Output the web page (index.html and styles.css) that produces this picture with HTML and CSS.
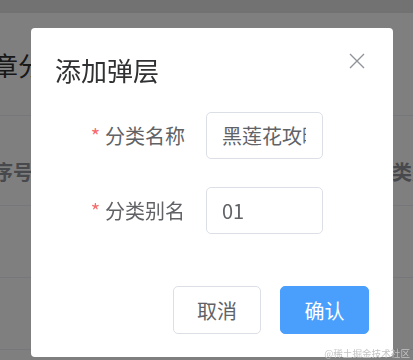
FILE: index.html
```html
<!DOCTYPE html>
<html lang="zh-CN">
<head>
<meta charset="utf-8">
<title>添加弹层</title>
<link rel="stylesheet" href="styles.css">
</head>
<body>
<div class="page">
  <div class="topbar"></div>
  <div class="heading">文章分类</div>
  <div class="table">
    <div class="thead">
      <span class="th first">序号</span>
      <span class="th">分类别名</span>
    </div>
    <div class="trow"></div>
    <div class="trow"></div>
  </div>
</div>
<div class="overlay"></div>
<div class="dialog">
  <div class="dialog-header">
    <span class="dialog-title">添加弹层</span>
    <button class="close" aria-label="关闭">
      <svg width="16" height="16" viewBox="0 0 16 16"><path d="M1 1 L15 15 M15 1 L1 15" stroke="#909399" stroke-width="1.4" fill="none"/></svg>
    </button>
  </div>
  <div class="dialog-body">
    <div class="form-item">
      <label class="label"><span class="req">*</span>分类名称</label>
      <input class="input" type="text" value="黑莲花攻略">
    </div>
    <div class="form-item">
      <label class="label"><span class="req">*</span>分类别名</label>
      <input class="input" type="text" value="01">
    </div>
  </div>
  <div class="dialog-footer">
    <button class="btn">取消</button>
    <button class="btn primary">确认</button>
  </div>
</div>
<div class="watermark">@稀土掘金技术社区</div>
</body>
</html>
```

FILE: styles.css
```css
* { box-sizing: border-box; }
html, body {
  margin: 0;
  padding: 0;
  width: 413px;
  height: 360px;
  overflow: hidden;
  background: #ffffff;
  font-family: "Noto Sans CJK SC", "Noto Sans", sans-serif;
}
.page {
  width: 413px;
  height: 360px;
  overflow: hidden;
  background: #ffffff;
}
.topbar {
  height: 13px;
  background: #e4e4e4;
}
.heading {
  height: 103px;
  margin-left: -34px;
  padding-top: 39px;
  font-size: 26px;
  line-height: 26px;
  color: #303133;
  border-bottom: 1px solid #ebeef5;
  white-space: nowrap;
}
.thead {
  display: grid;
  grid-template-columns: 372px auto;
  height: 90px;
  align-items: start;
  padding-top: 46px;
  border-bottom: 1px solid #ebeef5;
  white-space: nowrap;
}
.th {
  font-size: 20px;
  line-height: 20px;
  font-weight: bold;
  color: #909399;
}
.th.first { margin-left: -7px; }
.trow {
  height: 72px;
  border-bottom: 1px solid #ebeef5;
}
.overlay {
  position: fixed;
  inset: 0;
  background: rgba(0, 0, 0, 0.5);
}
.dialog {
  position: fixed;
  left: 31px;
  top: 28px;
  width: 362px;
  height: 329px;
  background: #ffffff;
  border-radius: 4px;
  display: flex;
  flex-direction: column;
}
.dialog-header {
  position: relative;
  padding: 29px 24px 0 24px;
  height: 55px;
}
.dialog-title {
  display: block;
  font-size: 26px;
  line-height: 26px;
  color: #303133;
}
.close {
  position: absolute;
  left: 318px;
  top: 25px;
  width: 16px;
  height: 16px;
  padding: 0;
  border: 0;
  background: transparent;
  display: block;
}
.close svg { display: block; }
.dialog-body {
  padding-top: 29px;
  padding-left: 24px;
  display: flex;
  flex-direction: column;
  gap: 28px;
}
.form-item {
  display: flex;
  align-items: center;
  height: 47px;
}
.label {
  width: 151px;
  flex-shrink: 0;
  padding-right: 21px;
  text-align: right;
  font-size: 20px;
  line-height: 47px;
  color: #606266;
  white-space: nowrap;
}
.req {
  color: #f56c6c;
  margin-right: 5px;
}
.input {
  width: 117px;
  height: 47px;
  border: 1px solid #dcdfe6;
  border-radius: 5px;
  padding: 0 16px 0 15px;
  font-family: "Noto Sans CJK SC", "Noto Sans", sans-serif;
  font-size: 20px;
  color: #606266;
  background: #ffffff;
  outline: none;
}
.dialog-footer {
  margin-top: auto;
  display: flex;
  justify-content: flex-end;
  gap: 19px;
  padding: 0 24px 23px 0;
}
.btn {
  width: 88px;
  height: 48px;
  border: 1px solid #dcdfe6;
  border-radius: 5px;
  background: #ffffff;
  color: #606266;
  font-family: "Noto Sans CJK SC", "Noto Sans", sans-serif;
  font-size: 20px;
  padding: 0;
}
.btn.primary {
  width: 89px;
  background: #4a9ffd;
  border-color: #4a9ffd;
  color: #ffffff;
}
.watermark {
  position: fixed;
  right: 3px;
  bottom: 2px;
  font-size: 9.6px;
  line-height: 10px;
  color: #c4c4c4;
  white-space: nowrap;
}
```
